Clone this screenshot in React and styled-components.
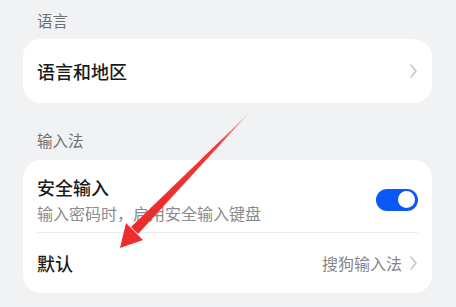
import React from 'react';
import styled, {createGlobalStyle} from 'styled-components';

const Global = createGlobalStyle`
body {
	margin: 0;
	background: #f1f2f4;
	font-family: "Noto Sans CJK SC", "Noto Sans", sans-serif;
}
`;

const Page = styled.div`
position: relative;
width: 456px;
height: 307px;
padding: 10px 24px 0 23px;
box-sizing: border-box;
overflow: hidden;
`;

const SectionLabel = styled.div`
padding-left: 14px;
font-size: 15.5px;
line-height: 20px;
color: #6f7074;
margin-top: ${({first}) => first ? 0 : 27}px;
margin-bottom: ${({first}) => first ? 9 : 10}px;
`;

const Card = styled.div`
background: #fff;
border-radius: 18px;
padding: 0 14px;
`;

const Row = styled.div`
display: flex;
align-items: center;
justify-content: space-between;
height: ${({h}) => h}px;
padding-top: ${({shift = 0}) => shift}px;
box-sizing: border-box;
`;

const Divider = styled.div`
height: 1px;
background: #ececee;
`;

const TextCol = styled.div`
display: flex;
flex-direction: column;
gap: 5px;
`;

const Title = styled.div`
font-size: 18px;
line-height: 22px;
font-weight: 500;
color: #1b1b1d;
`;

const Subtitle = styled.div`
font-size: 16px;
line-height: 20px;
color: #8a8b8e;
`;

const Value = styled.div`
display: flex;
align-items: center;
gap: 7px;
font-size: 16px;
color: #85868a;
`;

const Toggle = styled.div`
width: 42px;
height: 22px;
border-radius: 11px;
background: #0a59f7;
display: flex;
align-items: center;
justify-content: flex-end;
padding: 0 3px;
box-sizing: border-box;

&::after {
	content: '';
	width: 17px;
	height: 17px;
	border-radius: 50%;
	background: #fff;
}
`;

const Overlay = styled.svg`
position: absolute;
left: 0;
top: 0;
pointer-events: none;
`;

const Chevron = () => <svg width="9" height="16" viewBox="0 0 9 16">
	<path d="M2 2 L7 8 L2 14" fill="none" stroke="#c4c5c8" strokeWidth="1.5" strokeLinecap="round" strokeLinejoin="round" />
</svg>;

const RedArrow = () => <Overlay width="456" height="307">
	<defs>
		<linearGradient id="fade" x1="250" y1="112" x2="160" y2="205" gradientUnits="userSpaceOnUse">
			<stop offset="0" stopColor="#f03a3a" stopOpacity="0.2" />
			<stop offset="0.35" stopColor="#f03a3a" />
			<stop offset="1" stopColor="#ec2d2d" />
		</linearGradient>
	</defs>
	<polygon points="251,111 138,234 131,227" fill="url(#fade)" />
	<polygon points="120,248 126,223 143,240" fill="#ec2d2d" />
</Overlay>;

export default function App() {
	return <Page>
		<Global />
		<SectionLabel first>语言</SectionLabel>
		<Card>
			<Row h={64}>
				<Title>语言和地区</Title>
				<Chevron />
			</Row>
		</Card>
		<SectionLabel>输入法</SectionLabel>
		<Card>
			<Row h={72} shift={7}>
				<TextCol>
					<Title>安全输入</Title>
					<Subtitle>输入密码时，启用安全输入键盘</Subtitle>
				</TextCol>
				<Toggle />
			</Row>
			<Divider />
			<Row h={60}>
				<Title>默认</Title>
				<Value>搜狗输入法<Chevron /></Value>
			</Row>
		</Card>
		<RedArrow />
	</Page>;
}
